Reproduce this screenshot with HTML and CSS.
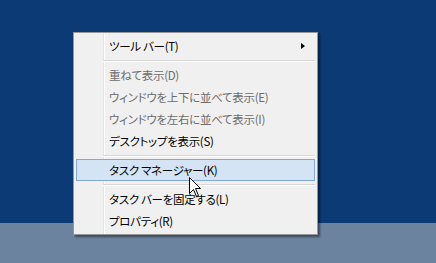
FILE: index.html
```
<!DOCTYPE html>
<html lang="ja">
<head>
    <meta charset="utf-8">
    <title>タスク バー メニュー</title>
    <link rel="stylesheet" href="styles.css">
</head>
<body>
<div class="desktop">
    <div class="menu">
        <div class="item">ツール バー(T)<span class="arrow"></span></div>
        <div class="sep"></div>
        <div class="item off">重ねて表示(D)</div>
        <div class="item off">ウィンドウを上下に並べて表示(E)</div>
        <div class="item off">ウィンドウを左右に並べて表示(I)</div>
        <div class="item">デスクトップを表示(S)</div>
        <div class="sep"></div>
        <div class="item hot">タスク マネージャー(K)</div>
        <div class="sep"></div>
        <div class="item">タスク バーを固定する(L)</div>
        <div class="item">プロパティ(R)</div>
    </div>
    <svg class="cursor" width="13" height="21" viewBox="0 0 13 21">
        <path d="M0.5 0.5 L0.5 16.5 L4.5 12.5 L7.5 19.5 L9.5 18.5 L6.5 11.5 L11.5 11.5 Z" fill="#fff" stroke="#000" stroke-width="1"/>
    </svg>
</div>
<div class="taskbar"></div>
</body>
</html>
```
FILE: styles.css
```
* {padding:0; margin:0; box-sizing:border-box}
body {width:436px; height:263px; overflow:hidden; font:11.5px "Noto Sans CJK JP", sans-serif; font-feature-settings:"palt"; letter-spacing:-0.3px; background:#0b3a74}
.desktop {position:relative; height:223px; background:#0b3a74}
.taskbar {height:40px; background:#6b839f}

.menu {position:absolute; left:73px; top:32px; width:245px; padding:2px; background:#f0f0f0; border:1px solid #979797; box-shadow:2px 2px 2px rgba(0,0,0,0.45); z-index:10}
.menu:before {content:""; position:absolute; left:29px; top:0; bottom:0; width:1px; background:#e2e3e3; border-right:1px solid #fff; box-sizing:content-box}
.item {position:relative; height:22px; line-height:20px; padding-left:32px; color:#000; white-space:nowrap; border:1px solid transparent}
.item.off {color:#6d6d6d}
.item.hot {background:#d5e4f5; border-color:#84a8d8; z-index:1}
.arrow {position:absolute; right:9px; top:7px; width:0; height:0; border-left:4px solid #000; border-top:3.5px solid transparent; border-bottom:3.5px solid transparent}
.sep {position:relative; height:7px; margin-left:27px; z-index:1}
.sep:after {content:""; position:absolute; left:0; right:0; top:3px; height:1px; background:#d7d7d7; border-bottom:1px solid #fff; box-sizing:content-box}

.cursor {position:absolute; left:189px; top:177px; z-index:20}
```
